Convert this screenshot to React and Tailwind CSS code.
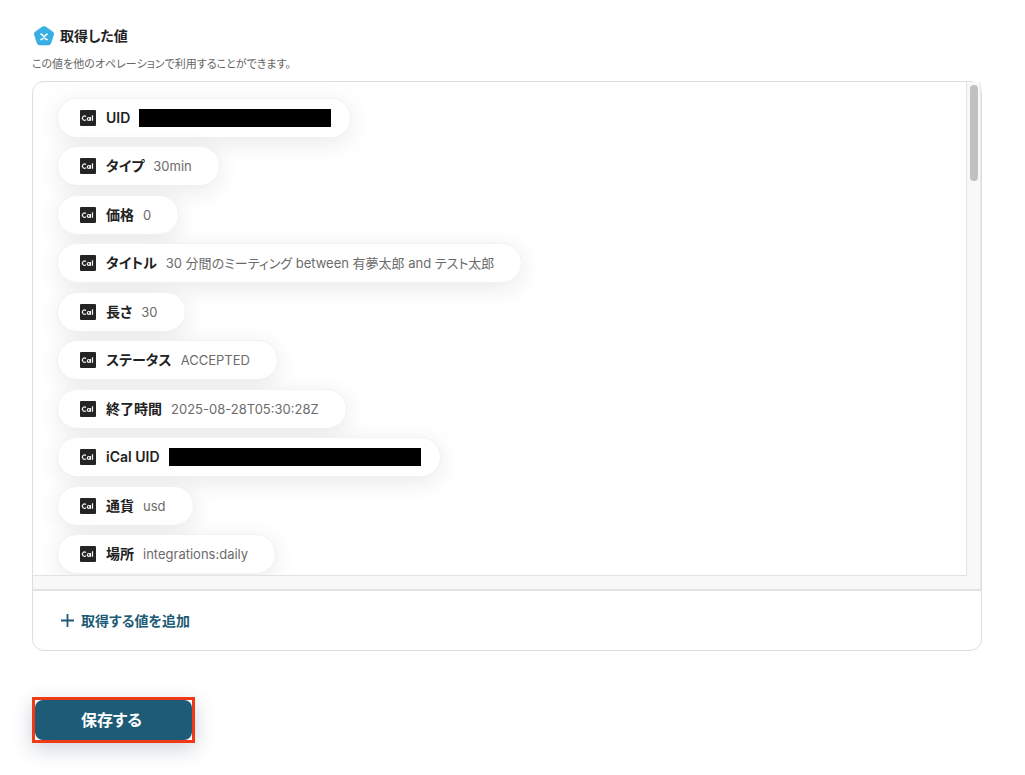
import React from "react";

const values = [
  { name: "UID", redacted: "w-[192px]" },
  { name: "タイプ", value: "30min" },
  { name: "価格", value: "0" },
  { name: "タイトル", value: "30 分間のミーティング between 有夢太郎 and テスト太郎" },
  { name: "長さ", value: "30" },
  { name: "ステータス", value: "ACCEPTED" },
  { name: "終了時間", value: "2025-08-28T05:30:28Z" },
  { name: "iCal UID", redacted: "w-[252px]" },
  { name: "通貨", value: "usd" },
  { name: "場所", value: "integrations:daily" },
];

function ValueIcon() {
  return (
    <svg className="h-5 w-6" viewBox="0 0 24 20" aria-hidden="true">
      <path
        d="M10.4 1.1a3 3 0 0 1 3.2 0l6.900 4.600a2.600 2.600 0 0 1 1 3l-2.600 8.200a2.800 2.800 0 0 1-2.600 2H7.700a2.800 2.800 0 0 1-2.600-2L2.500 8.700a2.600 2.600 0 0 1 1-3z"
        fill="#38aee6"
        stroke="#38aee6"
        strokeWidth="0.8"
      />
      <path d="M8.300 8.300h1.500l4.200 5.200h1.700M15.700 8.300h-1.100l-4.800 5.200h-1.500" fill="none" stroke="#fff" strokeWidth="1.500" />
    </svg>
  );
}

function CalIcon() {
  return (
    <svg className="size-4 shrink-0" viewBox="0 0 16 16" aria-hidden="true">
      <rect width="16" height="16" rx="1" fill="#242424" />
      <g fill="none" stroke="#f2f2f2" strokeWidth="1.200">
        <path d="M6 6.600A2.100 2.100 0 1 0 6 9.600" />
        <circle cx="8.700" cy="8.900" r="1.400" />
        <path d="M10.500 7v3.800M12.500 5.200v5.600" />
      </g>
    </svg>
  );
}

function ValueChip({ item }) {
  return (
    <li className="flex h-10 items-center rounded-full border border-[#f2f2f2] bg-white pr-[19px] pl-[22px] shadow-[0_5px_24px_rgba(0,0,0,0.09)]">
      <CalIcon />
      <span className="ml-[10px] text-sm leading-5 font-semibold whitespace-nowrap text-[#222]">{item.name}</span>
      {item.redacted ? (
        <span className={`ml-[9px] h-[18px] bg-black ${item.redacted}`} />
      ) : (
        <span className="mr-2 ml-[9px] text-[13px] leading-5 whitespace-nowrap text-[#6b6b6b]">{item.value}</span>
      )}
    </li>
  );
}

export default function App() {
  return (
    <main
      lang="ja"
      className="min-h-screen bg-white pt-6 pr-[43px] pb-8 pl-8 font-['Inter','Noto_Sans_CJK_JP',sans-serif] text-[#222] [font-feature-settings:'palt']"
    >
      <h2 className="flex h-6 items-center gap-1 text-sm font-semibold">
        <ValueIcon />
        取得した値
      </h2>
      <p className="mt-[7px] text-[11px] leading-[18px] text-[#666]">
        この値を他のオペレーションで利用することができます。
      </p>

      <section className="mt-2 rounded-xl border border-[#dedede]">
        <div className="flex border-b-2 border-[#e2e2e2]">
          <div className="min-w-0 grow">
            <div className="overflow-hidden rounded-tl-xl border-r border-b border-[#e2e2e2] pt-4 pb-px pl-6">
              <ul className="flex h-[476px] flex-col items-start justify-between">
                {values.map((item) => (
                  <ValueChip key={item.name} item={item} />
                ))}
              </ul>
            </div>
            <div className="h-[13px] bg-[#f8f8f8]" />
          </div>
          <div className="w-[14px] shrink-0 border-r border-[#e8e8e8] bg-[#f8f8f8] px-[3px] pt-[3px]">
            <div className="h-24 w-2 rounded-full bg-[#c1c1c1]" />
          </div>
        </div>
        <div className="flex h-[59px] items-center pl-7">
          <button type="button" className="flex items-center gap-[7px] text-sm leading-5 font-semibold text-[#1d5b76]">
            <svg className="size-[13px]" viewBox="0 0 13 13" aria-hidden="true">
              <path d="M6.500 0v13M0 6.500h13" stroke="currentColor" strokeWidth="1.800" />
            </svg>
            取得する値を追加
          </button>
        </div>
      </section>

      <div className="mt-[46px] w-[163px] border-3 border-[#f03a17] shadow-[0_6px_20px_rgba(30,50,80,0.22)]">
        <button type="button" className="h-10 w-full rounded-lg bg-[#1d5b76] pr-1 text-base font-semibold text-white">
          保存する
        </button>
      </div>
    </main>
  );
}
